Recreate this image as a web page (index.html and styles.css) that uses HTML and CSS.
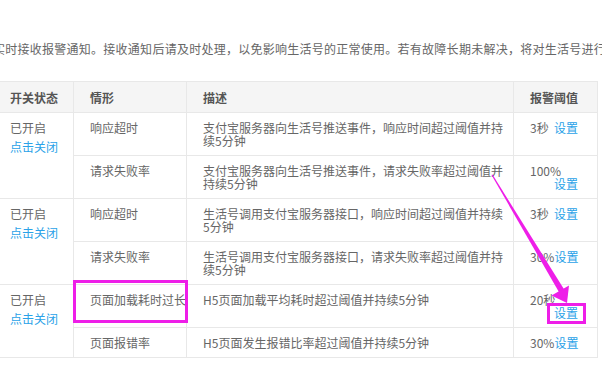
FILE: index.html
```html
<!DOCTYPE html>
<html lang="zh-CN">
<head>
<meta charset="utf-8">
<title>报警设置</title>
<link rel="stylesheet" href="styles.css">
</head>
<body>
<div class="page">
  <p class="intro">实时接收报警通知。接收通知后请及时处理，以免影响生活号的正常使用。若有故障长期未解决，将对生活号进行</p>
  <table class="alarm">
    <colgroup>
      <col class="c1"><col class="c2"><col class="c3"><col class="c4">
    </colgroup>
    <thead>
      <tr><th>开关状态</th><th>情形</th><th>描述</th><th>报警阈值</th></tr>
    </thead>
    <tbody>
      <tr>
        <td rowspan="2" class="status"><span>已开启</span><a class="link block">点击关闭</a></td>
        <td class="scene">响应超时</td>
        <td>支付宝服务器向生活号推送事件，响应时间超过阈值并持续5分钟</td>
        <td><div class="th"><span>3秒</span><a class="link">设置</a></div></td>
      </tr>
      <tr>
        <td class="scene">请求失败率</td>
        <td>支付宝服务器向生活号推送事件，请求失败率超过阈值并持续5分钟</td>
        <td><div class="th stack"><span>100%</span><a class="link">设置</a></div></td>
      </tr>
      <tr>
        <td rowspan="2" class="status"><span>已开启</span><a class="link block">点击关闭</a></td>
        <td class="scene">响应超时</td>
        <td>生活号调用支付宝服务器接口，响应时间超过阈值并持续5分钟</td>
        <td><div class="th"><span>3秒</span><a class="link">设置</a></div></td>
      </tr>
      <tr>
        <td class="scene">请求失败率</td>
        <td>生活号调用支付宝服务器接口，请求失败率超过阈值并持续5分钟</td>
        <td><div class="th"><span>30%</span><a class="link">设置</a></div></td>
      </tr>
      <tr>
        <td rowspan="2" class="status"><span>已开启</span><a class="link block">点击关闭</a></td>
        <td class="scene">页面加载耗时过长</td>
        <td>H5页面加载平均耗时超过阈值并持续5分钟</td>
        <td><div class="th stack"><span>20秒</span><a class="link">设置</a></div></td>
      </tr>
      <tr>
        <td class="scene">页面报错率</td>
        <td>H5页面发生报错比率超过阈值并持续5分钟</td>
        <td><div class="th"><span>30%</span><a class="link">设置</a></div></td>
      </tr>
    </tbody>
  </table>
</div>
<div class="mark box-scene"></div>
<div class="mark box-set"></div>
<svg class="arrow" width="602" height="370" viewBox="0 0 602 370">
  <polygon points="491.5,175 492.5,174.6 564.5,290 559.5,293" fill="#ee1ee8"/>
  <polygon points="567,303 551.5,295.5 569,285.5" fill="#ee1ee8"/>
</svg>
</body>
</html>
```
FILE: styles.css
```css
html, body {
  margin: 0;
  padding: 0;
  background: #fff;
  overflow: hidden;
}
body {
  width: 602px;
  height: 370px;
  position: relative;
  font-family: "Noto Sans CJK SC", "Noto Sans", sans-serif;
  font-size: 12px;
  color: #666;
}
.page {
  margin-left: -7px;
  padding-top: 42px;
}
.intro {
  margin: 0 0 26px 0;
  line-height: 13px;
  white-space: nowrap;
  letter-spacing: 0.26px;
}
.alarm {
  border-collapse: collapse;
  table-layout: fixed;
  width: 604px;
  border: 1px solid #e8e8e8;
}
.c1 { width: 80px; }
.c2 { width: 113px; }
.c3 { width: 327px; }
.c4 { width: 84px; }
.alarm th {
  background: #f5f5f5;
  color: #555;
  font-weight: bold;
  text-align: left;
  line-height: 13px;
  padding: 9px 8px 8px 16px;
  border: 1px solid #e8e8e8;
}
.alarm td {
  vertical-align: top;
  line-height: 13px;
  padding: 8px 8px 8px 16px;
  border: 1px solid #e8e8e8;
}
.alarm td.scene {
  padding-right: 0;
  white-space: nowrap;
}
.link {
  color: #2aa2e8;
  cursor: pointer;
}
.link.block {
  display: block;
  margin-top: 6px;
}
.th {
  display: flex;
  width: 48px;
  white-space: nowrap;
}
.th .link {
  margin-left: auto;
  flex-shrink: 0;
}
.th.stack {
  flex-direction: column;
}
.th.stack .link {
  align-self: flex-end;
  margin-left: 0;
}
.mark {
  position: absolute;
  border: 3px solid #ee1ee8;
  box-sizing: border-box;
}
.box-scene {
  left: 73px;
  top: 280px;
  width: 115px;
  height: 43px;
}
.box-set {
  left: 547px;
  top: 303px;
  width: 39px;
  height: 21px;
}
.arrow {
  position: absolute;
  left: 0;
  top: 0;
  pointer-events: none;
}
```
